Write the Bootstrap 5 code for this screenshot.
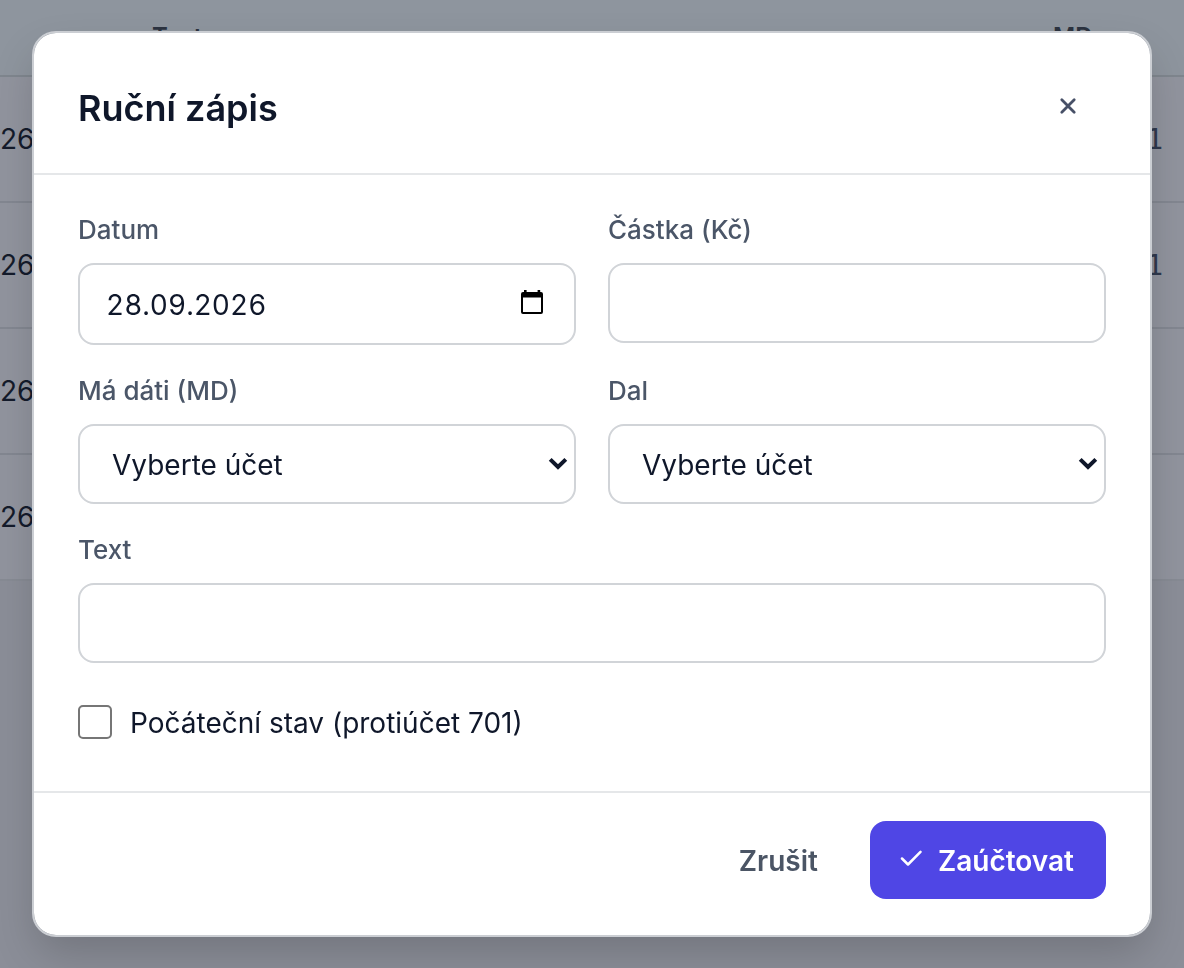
<!DOCTYPE html>
<html lang="cs">
<head>
<meta charset="utf-8">
<meta name="viewport" content="width=device-width, initial-scale=1">
<title>Ruční zápis</title>
<link href="https://cdn.jsdelivr.net/npm/bootstrap@5.3.0/dist/css/bootstrap.min.css" rel="stylesheet">
<style>
body { font-family: Inter, "Liberation Sans", sans-serif; font-size: 28px; line-height: 40px; color: #0f172a; background: #8b8e98; overflow: hidden; }
.ledger { background: #91949e; border-collapse: separate; border-spacing: 0; box-shadow: 0 2px 6px rgba(0,0,0,.1); color: #141b2b; }
.ledger th { height: 77px; padding: 0 0 2px; vertical-align: middle; font-size: 24px; font-weight: 600; color: #2c3340; background: #8e959e; border-bottom: 2px solid #7f868e; }
.ledger td { height: 126px; padding: 0; vertical-align: middle; border-bottom: 2px solid #838791; }
.ledger tr:last-child td { border-bottom-color: #878b94; }
.ledger .day-col { width: 152px; }
.ledger .account-col { width: 131px; }
.ledger td.account-col { padding: 2px 21px 0 0; text-align: right; color: #2f384c; font-family: "DejaVu Sans Mono", monospace; }
.entry-dialog { max-width: none; margin: 31px 32px; }
.entry-panel { border: 2px solid #cbced3; border-radius: 24px; box-shadow: 0 20px 44px -4px rgba(0,0,0,.18); color: #0f172a; }
.entry-head { height: 142px; padding: 10px 44px 0; border-bottom: 2px solid #e5e7e9; border-radius: 0; }
.entry-title { font-size: 36px; line-height: 44px; font-weight: 600; }
.close-btn { width: 76px; height: 60px; border: 0; background: none; color: #475067; margin-bottom: 8px; padding: 0; }
.entry-body { padding: 40px 44px 41px; }
.entry-grid { display: grid; grid-template-columns: 1fr 1fr; gap: 31px 32px; align-items: start; }
.span-all { grid-column: 1 / -1; }
.field-label { display: block; margin-bottom: 18px; font-size: 26px; line-height: 30px; font-weight: 500; color: #4b5668; }
.field-box { height: 80px; padding: 2px 26px 0; border: 2px solid #d1d4d8; border-radius: 16px; font-size: 28px; line-height: 40px; color: #0f172a; background-color: #fff; }
.date-box { height: 82px; font-variant-numeric: tabular-nums; }
.pick-btn { position: absolute; top: 19px; right: 29px; width: 30px; height: 40px; padding: 0; border: 0; background: none; color: #000; line-height: 0; }
select.field-box { appearance: none; padding-left: 32px; }
.chevron { position: absolute; top: 33px; right: 8px; pointer-events: none; }
.check-row { min-height: 56px; gap: 18px; }
.check-row label { padding-top: 2px; }
.check-row input { appearance: none; width: 34px; height: 34px; margin: 0; border: 2px solid #767676; border-radius: 5px; background: #fff; }
.check-row input:checked { background: #4f46e5; }
.entry-foot { padding: 28px 44px 36px; border-top: 2px solid #e5e7e9; gap: 20px; }
.entry-foot > * { margin: 0; }
.entry-btn { height: 78px; padding: 2px 32px 0; border: 0; border-radius: 16px; font-size: 28px; line-height: 40px; font-weight: 600; }
.cancel-btn { color: #4b5565; }
.save-btn, .save-btn:hover { background: #4f46e5; color: #fff; }
.save-btn { gap: 16px; padding-left: 30px; }
.save-btn svg { margin-bottom: 6px; }
</style>
</head>
<body>
<table class="ledger w-100">
  <thead><tr><th class="day-col"></th><th>Text</th><th class="account-col">MD</th></tr></thead>
  <tbody>
    <tr><td>26</td><td></td><td class="account-col">1</td></tr>
    <tr><td>26</td><td></td><td class="account-col">1</td></tr>
    <tr><td>26</td><td></td><td></td></tr>
    <tr><td>26</td><td></td><td></td></tr>
  </tbody>
</table>

<div class="modal d-block" role="dialog" aria-modal="true" aria-labelledby="entryTitle">
  <div class="modal-dialog entry-dialog">
    <form class="modal-content entry-panel">
      <div class="modal-header entry-head">
        <h1 class="modal-title entry-title" id="entryTitle">Ruční zápis</h1>
        <button type="button" class="close-btn" aria-label="Zavřít">
          <svg width="18" height="18" viewBox="0 0 18 18" fill="none" stroke="currentColor" stroke-width="2.8" stroke-linecap="round" aria-hidden="true"><path d="M2.800 2.800l12.400 12.400M15.200 2.800L2.800 15.200"/></svg>
        </button>
      </div>
      <div class="modal-body entry-body">
        <div class="entry-grid">
          <div>
            <label class="field-label" for="entryDate">Datum</label>
            <div class="position-relative">
              <input class="form-control field-box date-box" id="entryDate" type="text" inputmode="numeric" value="28.09.2026">
              <button type="button" class="pick-btn" aria-label="Vybrat datum">
                <svg width="24" height="26" viewBox="0 0 24 26" aria-hidden="true"><path fill="currentColor" fill-rule="evenodd" d="M4 1h2.600v2h11V1h2.600v2H21a2 2 0 0 1 2 2v18a2 2 0 0 1-2 2H3a2 2 0 0 1-2-2V5a2 2 0 0 1 2-2h1zM3 8.500V23h18V8.500z"/></svg>
              </button>
            </div>
          </div>
          <div>
            <label class="field-label" for="entryAmount">Částka (Kč)</label>
            <input class="form-control field-box" id="entryAmount" type="text" inputmode="decimal">
          </div>
          <div>
            <label class="field-label" for="entryDebit">Má dáti (MD)</label>
            <div class="position-relative">
              <select class="field-box w-100" id="entryDebit"><option>Vyberte účet</option></select>
              <svg class="chevron" width="20" height="14" viewBox="0 0 20 14" fill="none" stroke="#0f172a" stroke-width="4" aria-hidden="true"><path d="M2.200 2.400L10 10l7.800-7.600"/></svg>
            </div>
          </div>
          <div>
            <label class="field-label" for="entryCredit">Dal</label>
            <div class="position-relative">
              <select class="field-box w-100" id="entryCredit"><option>Vyberte účet</option></select>
              <svg class="chevron" width="20" height="14" viewBox="0 0 20 14" fill="none" stroke="#0f172a" stroke-width="4" aria-hidden="true"><path d="M2.200 2.400L10 10l7.800-7.600"/></svg>
            </div>
          </div>
          <div class="span-all">
            <label class="field-label" for="entryText">Text</label>
            <input class="form-control field-box" id="entryText" type="text">
          </div>
          <div class="span-all check-row d-flex align-items-center">
            <input type="checkbox" id="entryOpening">
            <label for="entryOpening">Počáteční stav (protiúčet 701)</label>
          </div>
        </div>
      </div>
      <div class="modal-footer entry-foot">
        <button type="button" class="btn entry-btn cancel-btn">Zrušit</button>
        <button type="submit" class="btn entry-btn save-btn d-flex align-items-center">
          <svg width="22" height="16" viewBox="0 0 22 16" fill="none" stroke="currentColor" stroke-width="2.500" stroke-linecap="round" stroke-linejoin="round" aria-hidden="true"><path d="M2 8.500l6 6L20.500 1.800"/></svg>
          Zaúčtovat
        </button>
      </div>
    </form>
  </div>
</div>
<script src="https://cdn.jsdelivr.net/npm/bootstrap@5.3.0/dist/js/bootstrap.bundle.min.js"></script>
</body>
</html>
